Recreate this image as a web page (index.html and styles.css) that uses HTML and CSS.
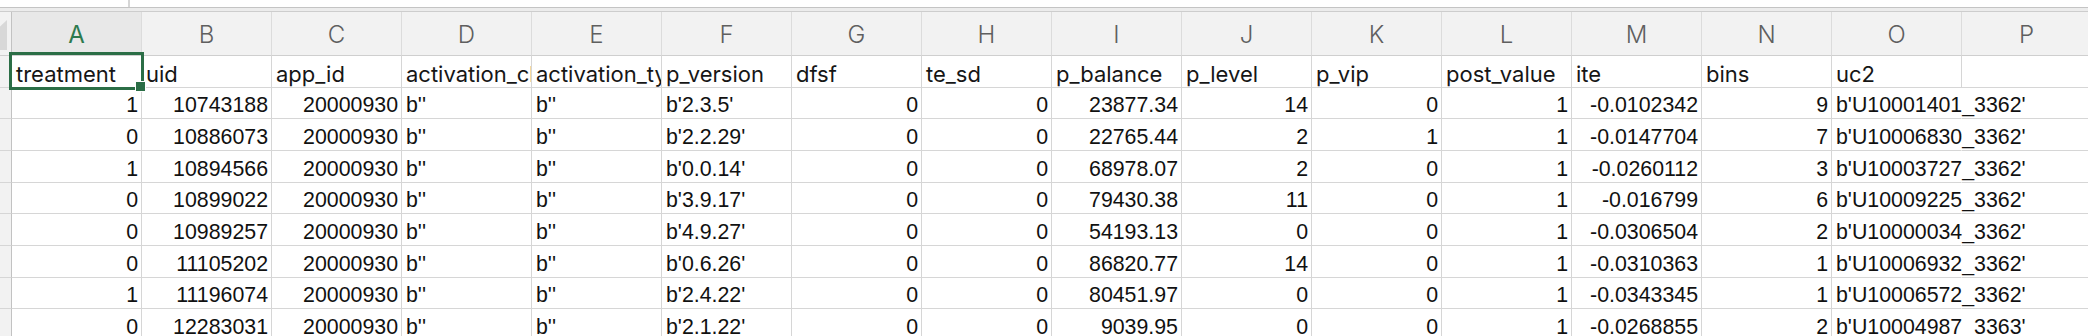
FILE: index.html
```html
<!DOCTYPE html>
<html>
<head>
<meta charset="utf-8">
<link rel="stylesheet" href="styles.css">
</head>
<body>
<div class="top"><div class="namebox"></div><div class="formula"></div></div>
<div class="band"></div>
<div class="sheet">
  <div class="corner"></div>
  <div class="ch sel">A</div><div class="ch">B</div><div class="ch">C</div><div class="ch">D</div><div class="ch">E</div><div class="ch">F</div><div class="ch">G</div><div class="ch">H</div><div class="ch">I</div><div class="ch">J</div><div class="ch">K</div><div class="ch">L</div><div class="ch">M</div><div class="ch">N</div><div class="ch">O</div><div class="ch">P</div>

  <div class="rh"></div>
  <div class="c h">treatment</div><div class="c h">uid</div><div class="c h">app_id</div><div class="c h">activation_channel</div><div class="c h">activation_type</div><div class="c h">p_version</div><div class="c h">dfsf</div><div class="c h">te_sd</div><div class="c h">p_balance</div><div class="c h">p_level</div><div class="c h">p_vip</div><div class="c h">post_value</div><div class="c h">ite</div><div class="c h">bins</div><div class="c h">uc2</div><div class="c"></div>

  <div class="rh"></div>
  <div class="c n">1</div><div class="c n">10743188</div><div class="c n">20000930</div><div class="c">b''</div><div class="c">b''</div><div class="c">b'2.3.5'</div><div class="c n">0</div><div class="c n">0</div><div class="c n">23877.34</div><div class="c n">14</div><div class="c n">0</div><div class="c n">1</div><div class="c n">-0.0102342</div><div class="c n">9</div><div class="c ov">b'U10001401_3362'</div><div class="c"></div>

  <div class="rh"></div>
  <div class="c n">0</div><div class="c n">10886073</div><div class="c n">20000930</div><div class="c">b''</div><div class="c">b''</div><div class="c">b'2.2.29'</div><div class="c n">0</div><div class="c n">0</div><div class="c n">22765.44</div><div class="c n">2</div><div class="c n">1</div><div class="c n">1</div><div class="c n">-0.0147704</div><div class="c n">7</div><div class="c ov">b'U10006830_3362'</div><div class="c"></div>

  <div class="rh"></div>
  <div class="c n">1</div><div class="c n">10894566</div><div class="c n">20000930</div><div class="c">b''</div><div class="c">b''</div><div class="c">b'0.0.14'</div><div class="c n">0</div><div class="c n">0</div><div class="c n">68978.07</div><div class="c n">2</div><div class="c n">0</div><div class="c n">1</div><div class="c n">-0.0260112</div><div class="c n">3</div><div class="c ov">b'U10003727_3362'</div><div class="c"></div>

  <div class="rh"></div>
  <div class="c n">0</div><div class="c n">10899022</div><div class="c n">20000930</div><div class="c">b''</div><div class="c">b''</div><div class="c">b'3.9.17'</div><div class="c n">0</div><div class="c n">0</div><div class="c n">79430.38</div><div class="c n">11</div><div class="c n">0</div><div class="c n">1</div><div class="c n">-0.016799</div><div class="c n">6</div><div class="c ov">b'U10009225_3362'</div><div class="c"></div>

  <div class="rh"></div>
  <div class="c n">0</div><div class="c n">10989257</div><div class="c n">20000930</div><div class="c">b''</div><div class="c">b''</div><div class="c">b'4.9.27'</div><div class="c n">0</div><div class="c n">0</div><div class="c n">54193.13</div><div class="c n">0</div><div class="c n">0</div><div class="c n">1</div><div class="c n">-0.0306504</div><div class="c n">2</div><div class="c ov">b'U10000034_3362'</div><div class="c"></div>

  <div class="rh"></div>
  <div class="c n">0</div><div class="c n">11105202</div><div class="c n">20000930</div><div class="c">b''</div><div class="c">b''</div><div class="c">b'0.6.26'</div><div class="c n">0</div><div class="c n">0</div><div class="c n">86820.77</div><div class="c n">14</div><div class="c n">0</div><div class="c n">1</div><div class="c n">-0.0310363</div><div class="c n">1</div><div class="c ov">b'U10006932_3362'</div><div class="c"></div>

  <div class="rh"></div>
  <div class="c n">1</div><div class="c n">11196074</div><div class="c n">20000930</div><div class="c">b''</div><div class="c">b''</div><div class="c">b'2.4.22'</div><div class="c n">0</div><div class="c n">0</div><div class="c n">80451.97</div><div class="c n">0</div><div class="c n">0</div><div class="c n">1</div><div class="c n">-0.0343345</div><div class="c n">1</div><div class="c ov">b'U10006572_3362'</div><div class="c"></div>

  <div class="rh"></div>
  <div class="c n">0</div><div class="c n">12283031</div><div class="c n">20000930</div><div class="c">b''</div><div class="c">b''</div><div class="c">b'2.1.22'</div><div class="c n">0</div><div class="c n">0</div><div class="c n">9039.95</div><div class="c n">0</div><div class="c n">0</div><div class="c n">1</div><div class="c n">-0.0268855</div><div class="c n">2</div><div class="c ov">b'U10004987_3363'</div><div class="c"></div>

  <div class="selection"></div>
  <div class="handle"></div>
</div>
</body>
</html>
```
FILE: styles.css
```css
html, body {
  margin: 0;
  padding: 0;
  background: #ffffff;
}
body {
  width: 2088px;
  height: 336px;
  overflow: hidden;
}
.top {
  display: flex;
  height: 7px;
  border-bottom: 1px solid #c4c4c4;
  background: #ffffff;
}
.namebox {
  width: 128px;
  border-right: 2px solid #d6d6d6;
}
.formula {
  flex: 1;
}
.band {
  height: 3px;
  background: #ececec;
  border-bottom: 1px solid #cdcdcd;
}
.sheet {
  position: relative;
  display: grid;
  grid-template-columns: 12px repeat(16, 130px);
  grid-template-rows: 44px;
  grid-auto-rows: 31.67px;
}
.corner {
  position: relative;
  background: #f2f2f2;
  border-right: 1px solid #c2c2c2;
  border-bottom: 1px solid #cfcfcf;
  box-sizing: border-box;
}
.corner::before {
  content: "";
  position: absolute;
  left: 0;
  top: 8px;
  width: 7px;
  height: 30px;
  background: #d8d8d8;
  clip-path: polygon(100% 0, 100% 100%, 0 100%, 0 22%);
}
.ch {
  box-sizing: border-box;
  background: #f2f2f2;
  border-right: 1px solid #dcdcdc;
  border-bottom: 1px solid #cfcfcf;
  display: flex;
  align-items: center;
  justify-content: center;
  font-family: Inter, "Noto Sans", sans-serif;
  font-size: 24px;
  font-weight: 300;
  color: #5f5f5f;
  padding-top: 1px;
}
.ch.sel {
  background: #e8e8e8;
  color: #2d7a4f;
  font-weight: 400;
}
.rh {
  box-sizing: border-box;
  background: #f2f2f2;
  border-right: 1px solid #c2c2c2;
  border-bottom: 1px solid #d6d6d6;
}
.c {
  box-sizing: border-box;
  border-right: 1px solid #d6d6d6;
  border-bottom: 1px solid #d6d6d6;
  display: flex;
  align-items: flex-end;
  padding: 0 3px 0 4px;
  overflow: hidden;
  white-space: nowrap;
  font-family: "Liberation Sans", Arial, sans-serif;
  font-size: 21.33px;
  line-height: normal;
  color: #111111;
  min-width: 0;
}
.n {
  justify-content: flex-end;
}
.h {
  font-family: Inter, "Noto Sans", sans-serif;
  font-size: 22px;
  padding-bottom: 0;
  color: #161616;
}
.ov {
  overflow: visible;
  border-right-color: transparent;
  position: relative;
  z-index: 1;
}
.selection {
  position: absolute;
  left: 9px;
  top: 40px;
  width: 135px;
  height: 38px;
  box-sizing: border-box;
  border: 3.5px solid #2b6e46;
  z-index: 2;
}
.handle {
  position: absolute;
  left: 135px;
  top: 69px;
  width: 11px;
  height: 11px;
  box-sizing: border-box;
  background: #2b6e46;
  border: 1px solid #ffffff;
  z-index: 3;
}
```
